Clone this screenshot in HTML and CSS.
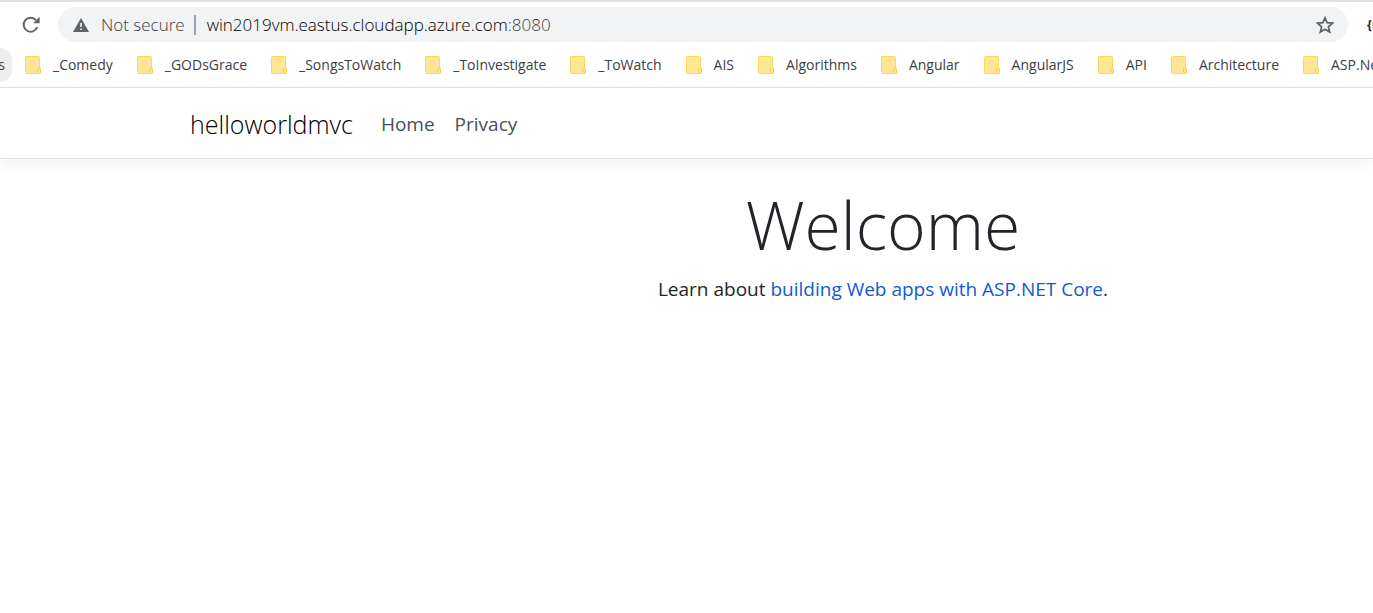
FILE: index.html
```html
<!DOCTYPE html>
<html lang="en">
<head>
<meta charset="utf-8">
<title>Home Page - helloworldmvc</title>
<link rel="stylesheet" href="styles.css">
</head>
<body>
<svg class="defs" width="0" height="0" aria-hidden="true">
  <symbol id="folder" viewBox="0 0 16 18">
    <path d="M1.5 .5H13.5Q14.5 .5 14.5 1.5V12.5Q15.5 12.5 15.5 13.5V16.5Q15.5 17.5 14.5 17.5H1.5Q.5 17.5 .5 16.5V1.5Q.5 .5 1.5 .5Z" fill="#ffe694" stroke="#fbd75b"/>
    <path d="M12.5 16.5V13.5Q12.5 12.5 13.5 12.5H14.5Q15.5 12.5 15.5 13.5V16Q15.5 17.5 14 17.5" fill="#ffe694" stroke="#f7cb45"/>
  </symbol>
</svg>
<div class="browser">
  <div class="toolbar">
    <button class="icon-button reload" type="button" aria-label="Reload">
      <svg width="18" height="18" viewBox="0 0 18 18"><path d="M15.2 11.2A7 7 0 1 1 14 4.2" fill="none" stroke="#5f6368" stroke-width="2"/><path d="M17.6 .8V7.2H11.2Z" fill="#5f6368"/></svg>
    </button>
    <div class="address">
      <svg width="16" height="14" viewBox="0 0 16 14" aria-hidden="true"><path d="M8 0 16 14H0Z" fill="#5f6368"/><path d="M7.2 5H8.8V9H7.2ZM7.2 10.4H8.8V12H7.2Z" fill="#f1f3f4"/></svg>
      <span class="security">Not secure</span>
      <span class="divider"></span>
      <span class="url">win2019vm.eastus.cloudapp.azure.com<span class="port">:8080</span></span>
      <button class="icon-button star" type="button" aria-label="Bookmark this page">
        <svg width="18" height="18" viewBox="0 0 18 18"><path d="M9 1.8 11.1 6.7 16.5 7.1 12.4 10.7 13.6 15.9 9 13.2 4.4 15.9 5.6 10.7 1.5 7.1 6.9 6.7Z" fill="none" stroke="#5f6368" stroke-width="1.8"/></svg>
      </button>
    </div>
    <button class="icon-button extension" type="button">{≡}</button>
  </div>
  <nav class="bookmarks" aria-label="Bookmarks">
    <a class="chip" href="#">s</a>
    <a class="bookmark" href="#"><svg class="folder"><use href="#folder"/></svg>_Comedy</a>
    <a class="bookmark" href="#"><svg class="folder"><use href="#folder"/></svg>_GODsGrace</a>
    <a class="bookmark" href="#"><svg class="folder"><use href="#folder"/></svg>_SongsToWatch</a>
    <a class="bookmark" href="#"><svg class="folder"><use href="#folder"/></svg>_ToInvestigate</a>
    <a class="bookmark" href="#"><svg class="folder"><use href="#folder"/></svg>_ToWatch</a>
    <a class="bookmark" href="#"><svg class="folder"><use href="#folder"/></svg>AIS</a>
    <a class="bookmark" href="#"><svg class="folder"><use href="#folder"/></svg>Algorithms</a>
    <a class="bookmark" href="#"><svg class="folder"><use href="#folder"/></svg>Angular</a>
    <a class="bookmark" href="#"><svg class="folder"><use href="#folder"/></svg>AngularJS</a>
    <a class="bookmark" href="#"><svg class="folder"><use href="#folder"/></svg>API</a>
    <a class="bookmark" href="#"><svg class="folder"><use href="#folder"/></svg>Architecture</a>
    <a class="bookmark" href="#"><svg class="folder"><use href="#folder"/></svg>ASP.Net</a>
  </nav>
</div>
<div class="page">
  <header class="navbar">
    <div class="container nav-inner">
      <a class="brand" href="#">helloworldmvc</a>
      <nav class="nav-links"><a href="#">Home</a><a href="#">Privacy</a></nav>
    </div>
  </header>
  <main class="container welcome">
    <h1>Welcome</h1>
    <p>Learn about <a href="#">building Web apps with ASP.NET Core</a>.</p>
  </main>
</div>
</body>
</html>
```
FILE: styles.css
```css
* { box-sizing: border-box; }
body {
  margin: 0;
  overflow: hidden;
  background: #fff;
  color: #212529;
  font-family: "Segoe UI", "Open Sans", "Noto Sans", sans-serif;
}
a { text-decoration: none; }
.defs { position: absolute; }
.browser {
  border-top: 2px solid #dee1e6;
  border-bottom: 1px solid #dadce0;
}
.toolbar {
  display: flex;
  align-items: center;
  height: 45px;
  padding-left: 22px;
  overflow: hidden;
}
.icon-button {
  display: flex;
  flex: none;
  padding: 0;
  border: 0;
  background: none;
}
.address {
  display: flex;
  flex: 1;
  align-items: center;
  height: 35px;
  margin-left: 18px;
  padding: 0 14px 0 15px;
  border-radius: 18px;
  background: #f1f3f4;
  font-size: 17px;
  font-weight: 300;
  white-space: nowrap;
}
.security { margin-left: 12px; color: #3c4043; }
.divider { width: 2px; height: 20px; margin: 0 11px 0 9px; background: #9aa0a6; }
.url { color: #000; }
.port { color: #3c4043; }
.star { margin-left: auto; }
.extension {
  width: 6px;
  margin-left: 19px;
  overflow: hidden;
  color: #202124;
  font: bold 12px "Open Sans", sans-serif;
}
.bookmarks {
  display: flex;
  align-items: center;
  height: 40px;
  padding-bottom: 4px;
  gap: 24px;
  overflow: hidden;
  font-size: 14px;
  line-height: 18px;
  white-space: nowrap;
}
.chip {
  display: flex;
  flex: none;
  align-items: center;
  justify-content: flex-end;
  width: 12px;
  height: 34px;
  margin-right: -11px;
  padding-right: 7px;
  border-radius: 0 17px 17px 0;
  background: #eee;
  color: #3c4043;
}
.bookmark {
  display: flex;
  flex: none;
  align-items: center;
  gap: 12px;
  color: #3c4043;
}
.folder { width: 16px; height: 18px; }
.page { overflow: hidden; }
.container {
  min-width: 1426px;
  margin-left: 170px;
  padding: 0 20px;
}
.navbar {
  height: 71px;
  border-bottom: 1px solid #dee2e6;
  box-shadow: 0 5px 15px rgba(0, 0, 0, .05);
}
.nav-inner {
  display: flex;
  align-items: center;
  height: 100%;
  padding-top: 2px;
}
.brand { color: #000; font-size: 25px; font-weight: 300; }
.nav-links {
  display: flex;
  gap: 20px;
  margin-left: 28px;
  color: #495057;
  font-size: 19px;
}
.nav-links a { color: inherit; }
.welcome { padding-top: 18px; text-align: center; }
h1 {
  margin: 0 0 2px;
  font-size: 66px;
  font-weight: 300;
  line-height: 95px;
}
p { margin: 0; font-size: 19px; line-height: 30px; }
p a { color: #0f5bd0; }
```
